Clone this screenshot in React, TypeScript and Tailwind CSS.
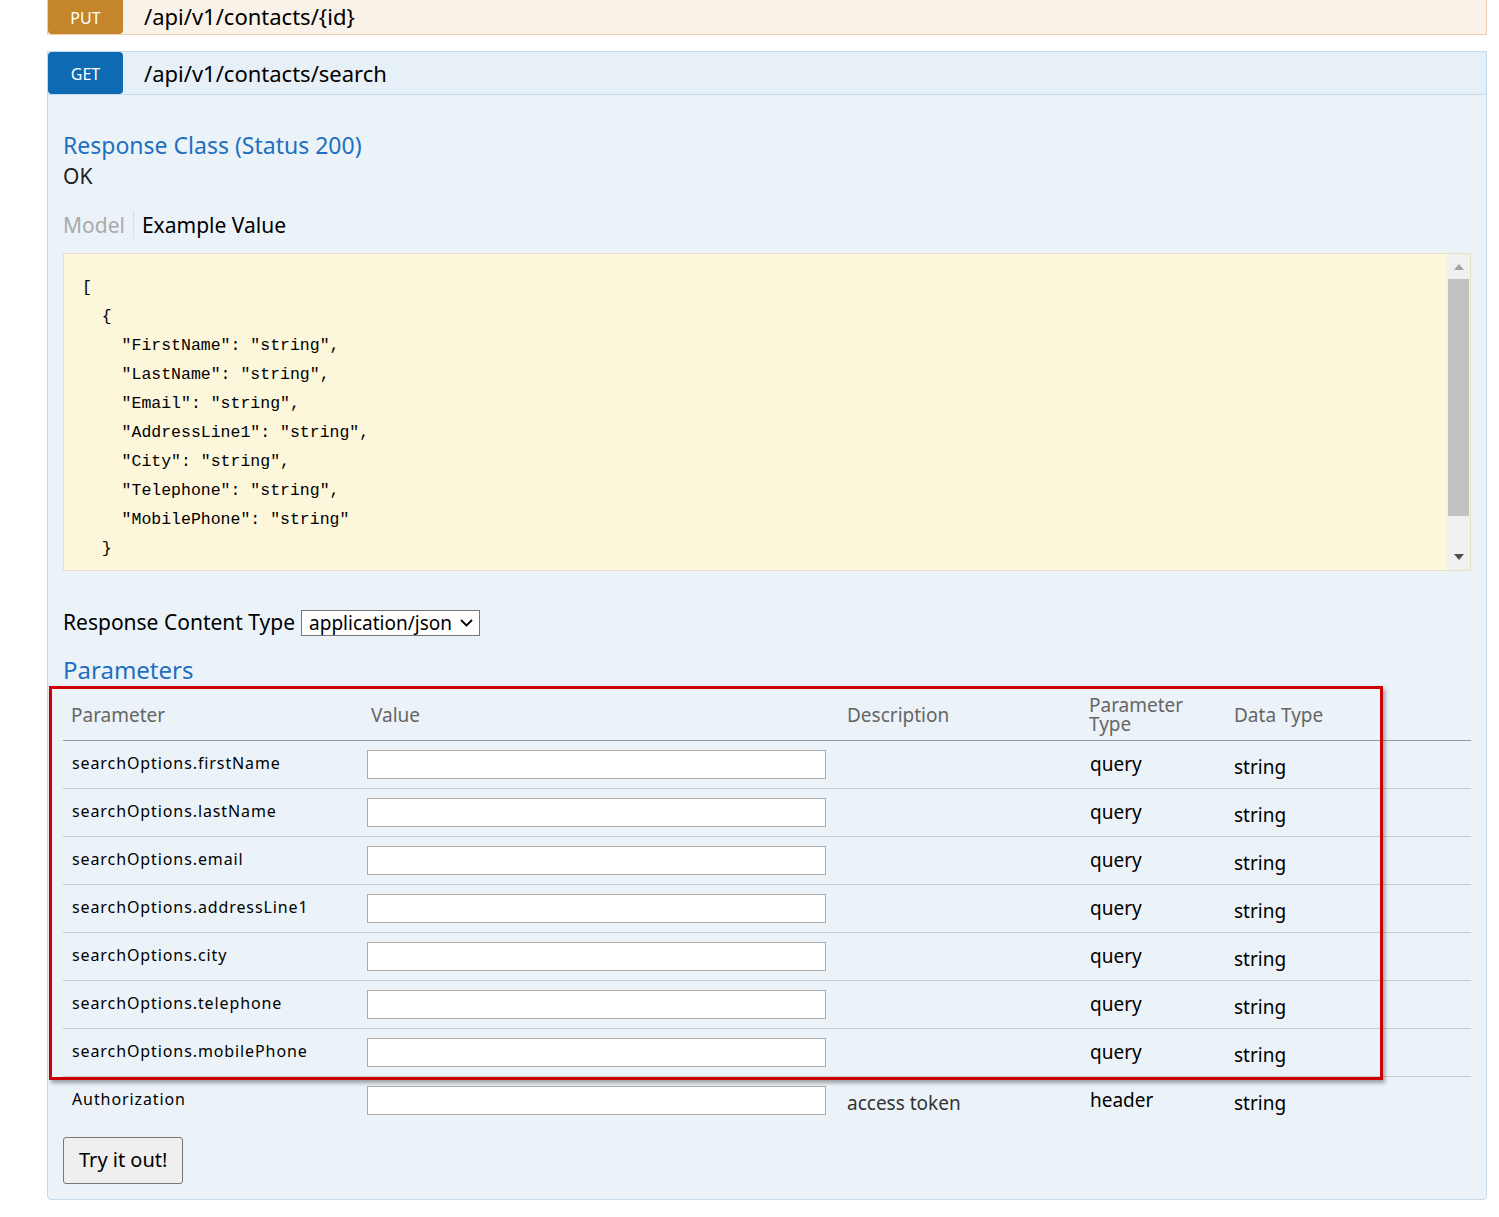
const params = [
  "searchOptions.firstName",
  "searchOptions.lastName",
  "searchOptions.email",
  "searchOptions.addressLine1",
  "searchOptions.city",
  "searchOptions.telephone",
  "searchOptions.mobilePhone",
];

const code = `[
  {
    "FirstName": "string",
    "LastName": "string",
    "Email": "string",
    "AddressLine1": "string",
    "City": "string",
    "Telephone": "string",
    "MobilePhone": "string"
  }
]`;

export default function App() {
  return (
    <div className="font-['Liberation_Sans'] bg-white min-h-[1217px] pl-[47px] pr-[12px] text-[#222]">
      {/* PUT row, cut off at the top */}
      <div className="-mt-[10px] flex h-[45px] items-stretch border border-[#f0cdb1] bg-[#f9f2e9]">
        <div className="flex w-[75px] items-center justify-center rounded-sm bg-[#c5862b] pt-[10px] text-[16px] text-white">PUT</div>
        <div className="flex items-center pl-[21px] pt-[8px] text-[22px] text-black">/api/v1/contacts/{"{id}"}</div>
      </div>

      <div className="mt-[16px] rounded-b-[4px] border border-[#c3d9ec] bg-[#ebf3f9]">
        <div className="flex h-[43px] items-stretch border-b border-[#c3d9ec] bg-[#e7f0f7]">
          <div className="flex w-[75px] items-center justify-center rounded-sm bg-[#0f6ab4] pt-[2px] text-[16px] text-white">GET</div>
          <div className="flex items-center pl-[21px] text-[22px] text-black">/api/v1/contacts/search</div>
        </div>

        <div className="relative px-[15px] pb-[15px] pt-[36px]">
          <div className="text-[23px] leading-[28px] text-[#1f6fbf]">Response Class (Status 200)</div>
          <div className="mt-[4px] text-[21px] leading-[26px] text-[#222]">OK</div>

          <div className="mt-[22px] flex items-center text-[21px] leading-[28px]">
            <span className="pr-[8px] text-[#aaa]">Model</span>
            <span className="border-l border-[#ddd] pl-[8px] text-black">Example Value</span>
          </div>

          <div className="mt-[14px] flex h-[318px] overflow-hidden border border-[#e5e0c6] bg-[#fcf6db]">
            <pre className="font-['DejaVu_Sans_Mono'] flex-1 overflow-hidden pl-[18px] pt-[19px] text-[16.5px] leading-[29px] text-black">{code}</pre>
            <div className="flex w-[23px] flex-col items-center bg-[#f0f0f0]">
              <svg width="10" height="6" className="mt-[10px]" viewBox="0 0 10 6"><path d="M0 6 L5 0 L10 6Z" fill="#a3a3a3" /></svg>
              <div className="mt-[9px] h-[237px] w-[21px] bg-[#c1c1c1]" />
              <svg width="10" height="6" className="mt-auto mb-[10px]" viewBox="0 0 10 6"><path d="M0 0 L5 6 L10 0Z" fill="#505050" /></svg>
            </div>
          </div>

          <div className="mt-[36px] flex items-center text-[21px] text-black">
            <span>Response Content Type</span>
            <span className="ml-[6px] flex h-[26px] items-center gap-[8px] border border-[#767676] bg-white pl-[7px] pr-[6px] text-[19px]">
              application/json
              <svg width="13" height="8" viewBox="0 0 13 8"><path d="M1 1 L6.5 6.5 L12 1" stroke="#000" strokeWidth="1.8" fill="none" /></svg>
            </span>
          </div>

          <div className="mt-[16px] text-[24px] leading-[30px] text-[#1f6fbf]">Parameters</div>

          <table className="mt-[6px] w-full table-fixed border-collapse">
            <colgroup>
              <col className="w-[304px]" />
              <col className="w-[478px]" />
              <col className="w-[243px]" />
              <col className="w-[144px]" />
              <col />
            </colgroup>
            <thead>
              <tr className="border-b border-[#999] text-left text-[19px] font-normal text-[#666]">
                <th className="h-[50px] pl-[8px] font-normal">Parameter</th>
                <th className="pl-[4px] font-normal">Value</th>
                <th className="pl-[2px] font-normal">Description</th>
                <th className="pl-[1px] font-normal leading-[19px]">Parameter<br />Type</th>
                <th className="pl-[2px] font-normal">Data Type</th>
              </tr>
            </thead>
            <tbody>
              {[...params, "Authorization"].map((p, i) => (
                <tr key={p} className={i < params.length ? "border-b border-[#ccc]" : ""}>
                  <td className="font-['DejaVu_Sans_Mono'] h-[48px] pl-[9px] align-top pt-[10px] text-[16px] tracking-[0.9px] text-black">{p}</td>
                  <td className="align-top pt-[9px]">
                    <div className="h-[29px] w-[459px] border border-[#aaa] bg-white" />
                  </td>
                  <td className="align-top pt-[12px] pl-[2px] text-[19px] text-[#333]">{p === "Authorization" ? "access token" : ""}</td>
                  <td className="align-top pt-[9px] pl-[2px] text-[19px] text-black">{p === "Authorization" ? "header" : "query"}</td>
                  <td className="align-top pt-[12px] pl-[2px] text-[19px] text-black">string</td>
                </tr>
              ))}
            </tbody>
          </table>

          <button className="mt-[12px] h-[47px] rounded-[3px] border border-[#777] bg-[#efefef] px-[15px] text-[20px] text-black">Try it out!</button>

          {/* red highlight box */}
          <div className="pointer-events-none absolute left-[1px] top-[591px] h-[394px] w-[1334px] border-[3px] border-[#cc0000] shadow-[2px_3px_4px_rgba(0,0,0,0.35)]" />
        </div>
      </div>
    </div>
  );
}
